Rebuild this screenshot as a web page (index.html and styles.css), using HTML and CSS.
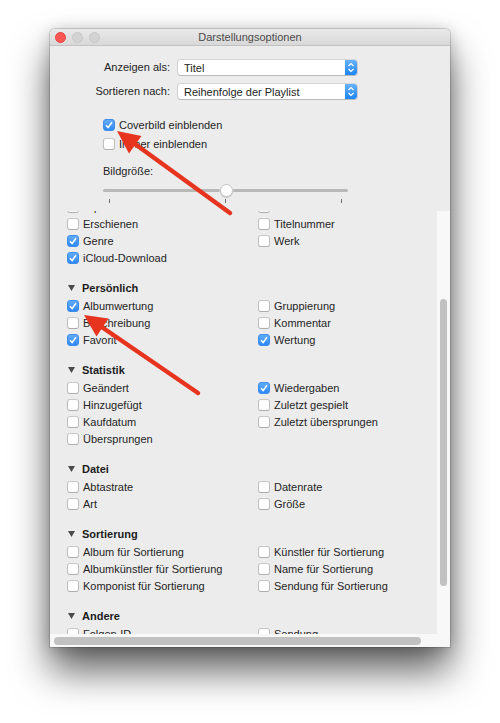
FILE: index.html
```html
<!DOCTYPE html>
<html lang="de">
<head>
    <meta charset="UTF-8">
    <title>Darstellungsoptionen</title>
    <link rel="stylesheet" href="styles.css">
</head>
<body>

    <div class="window">
        <!-- Titelleiste -->
        <div class="titlebar">
            <div class="lights">
                <span class="light red"></span>
                <span class="light"></span>
                <span class="light"></span>
            </div>
            <div class="title">Darstellungsoptionen</div>
        </div>

        <!-- Oberer Bereich -->
        <div class="top-pane">
            <div class="popups">
                <span class="label">Anzeigen als:</span>
                <div class="popup">
                    <span class="popup-text">Titel</span>
                    <span class="stepper"><svg width="12" height="15" viewBox="0 0 12 15"><path d="M3.5 6 L6 3.5 L8.5 6 M3.5 9 L6 11.5 L8.5 9" fill="none" stroke="#fff" stroke-width="1.2"/></svg></span>
                </div>
                <span class="label">Sortieren nach:</span>
                <div class="popup">
                    <span class="popup-text">Reihenfolge der Playlist</span>
                    <span class="stepper"><svg width="12" height="15" viewBox="0 0 12 15"><path d="M3.5 6 L6 3.5 L8.5 6 M3.5 9 L6 11.5 L8.5 9" fill="none" stroke="#fff" stroke-width="1.2"/></svg></span>
                </div>
            </div>

            <div class="display">
                <div class="check-row"><span class="box checked"><svg width="10" height="10" viewBox="0 0 10 10"><path d="M2 5.3 L4.1 7.5 L8 2.3" fill="none" stroke="#fff" stroke-width="1.5"/></svg></span>Coverbild einblenden</div>
                <div class="check-row"><span class="box"></span>Immer einblenden</div>
                <div class="size-label">Bildgröße:</div>
                <div class="slider">
                    <span class="track left"></span>
                    <span class="thumb"></span>
                    <span class="track right"></span>
                </div>
                <div class="ticks"><i></i><i></i><i></i></div>
            </div>
        </div>

        <!-- Spaltenliste -->
        <div class="scroll">
            <div class="viewport">
                <div class="list">
                    <div class="section first">
                        <div class="items">
                            <div class="item"><span class="box"></span>Equalizer</div>
                            <div class="item"><span class="box"></span>Titel</div>
                            <div class="item"><span class="box"></span>Erschienen</div>
                            <div class="item"><span class="box"></span>Titelnummer</div>
                            <div class="item"><span class="box checked"><svg width="10" height="10" viewBox="0 0 10 10"><path d="M2 5.3 L4.1 7.5 L8 2.3" fill="none" stroke="#fff" stroke-width="1.5"/></svg></span>Genre</div>
                            <div class="item"><span class="box"></span>Werk</div>
                            <div class="item"><span class="box checked"><svg width="10" height="10" viewBox="0 0 10 10"><path d="M2 5.3 L4.1 7.5 L8 2.3" fill="none" stroke="#fff" stroke-width="1.5"/></svg></span>iCloud-Download</div>
                        </div>
                    </div>

                    <div class="section">
                        <div class="header"><svg width="7" height="6" viewBox="0 0 7 6"><polygon points="0,0 7,0 3.5,6" fill="#4a4a4a"/></svg>Persönlich</div>
                        <div class="items">
                            <div class="item"><span class="box checked"><svg width="10" height="10" viewBox="0 0 10 10"><path d="M2 5.3 L4.1 7.5 L8 2.3" fill="none" stroke="#fff" stroke-width="1.5"/></svg></span>Albumwertung</div>
                            <div class="item"><span class="box"></span>Gruppierung</div>
                            <div class="item"><span class="box"></span>Beschreibung</div>
                            <div class="item"><span class="box"></span>Kommentar</div>
                            <div class="item"><span class="box checked"><svg width="10" height="10" viewBox="0 0 10 10"><path d="M2 5.3 L4.1 7.5 L8 2.3" fill="none" stroke="#fff" stroke-width="1.5"/></svg></span>Favorit</div>
                            <div class="item"><span class="box checked"><svg width="10" height="10" viewBox="0 0 10 10"><path d="M2 5.3 L4.1 7.5 L8 2.3" fill="none" stroke="#fff" stroke-width="1.5"/></svg></span>Wertung</div>
                        </div>
                    </div>

                    <div class="section">
                        <div class="header"><svg width="7" height="6" viewBox="0 0 7 6"><polygon points="0,0 7,0 3.5,6" fill="#4a4a4a"/></svg>Statistik</div>
                        <div class="items">
                            <div class="item"><span class="box"></span>Geändert</div>
                            <div class="item"><span class="box checked"><svg width="10" height="10" viewBox="0 0 10 10"><path d="M2 5.3 L4.1 7.5 L8 2.3" fill="none" stroke="#fff" stroke-width="1.5"/></svg></span>Wiedergaben</div>
                            <div class="item"><span class="box"></span>Hinzugefügt</div>
                            <div class="item"><span class="box"></span>Zuletzt gespielt</div>
                            <div class="item"><span class="box"></span>Kaufdatum</div>
                            <div class="item"><span class="box"></span>Zuletzt übersprungen</div>
                            <div class="item"><span class="box"></span>Übersprungen</div>
                        </div>
                    </div>

                    <div class="section">
                        <div class="header"><svg width="7" height="6" viewBox="0 0 7 6"><polygon points="0,0 7,0 3.5,6" fill="#4a4a4a"/></svg>Datei</div>
                        <div class="items">
                            <div class="item"><span class="box"></span>Abtastrate</div>
                            <div class="item"><span class="box"></span>Datenrate</div>
                            <div class="item"><span class="box"></span>Art</div>
                            <div class="item"><span class="box"></span>Größe</div>
                        </div>
                    </div>

                    <div class="section">
                        <div class="header"><svg width="7" height="6" viewBox="0 0 7 6"><polygon points="0,0 7,0 3.5,6" fill="#4a4a4a"/></svg>Sortierung</div>
                        <div class="items">
                            <div class="item"><span class="box"></span>Album für Sortierung</div>
                            <div class="item"><span class="box"></span>Künstler für Sortierung</div>
                            <div class="item"><span class="box"></span>Albumkünstler für Sortierung</div>
                            <div class="item"><span class="box"></span>Name für Sortierung</div>
                            <div class="item"><span class="box"></span>Komponist für Sortierung</div>
                            <div class="item"><span class="box"></span>Sendung für Sortierung</div>
                        </div>
                    </div>

                    <div class="section">
                        <div class="header"><svg width="7" height="6" viewBox="0 0 7 6"><polygon points="0,0 7,0 3.5,6" fill="#4a4a4a"/></svg>Andere</div>
                        <div class="items">
                            <div class="item"><span class="box"></span>Folgen-ID</div>
                            <div class="item"><span class="box"></span>Sendung</div>
                        </div>
                    </div>
                </div>
            </div>
            <div class="vtrack"><div class="vthumb"></div></div>
            <div class="htrack"><div class="hthumb"></div></div>
            <div class="corner"></div>
        </div>
    </div>

    <!-- Rote Pfeile (Anmerkungen) -->
    <svg class="arrows" width="500" height="723" viewBox="0 0 500 723">
        <line x1="230" y1="213" x2="135" y2="144" stroke="#e6341f" stroke-width="4.5" stroke-linecap="round"/>
        <polygon points="117,131 141.5,136 129,153.5" fill="#e6341f"/>
        <line x1="198" y1="393" x2="101" y2="326.5" stroke="#e6341f" stroke-width="4.5" stroke-linecap="round"/>
        <polygon points="84,315 108.5,318.5 96.5,336.5" fill="#e6341f"/>
    </svg>

</body>
</html>
```

FILE: styles.css
```css
body {
    margin: 0;
    padding: 29px 0 0 0;
    min-height: 723px;
    box-sizing: border-box;
    background: #fff;
    font-family: 'Liberation Sans', Arial, sans-serif;
    font-size: 11px;
    color: #242424;
}

/* Fenster mit Schatten */
.window {
    position: relative;
    width: 400px;
    height: 618px;
    margin: 0 auto;
    background: #ececec;
    border-radius: 5px 5px 0 0;
    display: flex;
    flex-direction: column;
    box-shadow: 0 0 0 1px rgba(0, 0, 0, 0.14), 0 24px 38px rgba(0, 0, 0, 0.62), 0 2px 16px rgba(0, 0, 0, 0.22);
}

/* Titelleiste */
.titlebar {
    height: 16px;
    flex-shrink: 0;
    display: grid;
    grid-template-columns: 1fr auto 1fr;
    align-items: center;
    background: linear-gradient(#e9e9e9, #d8d8d8);
    border-bottom: 1px solid #c2c2c2;
    border-radius: 5px 5px 0 0;
}

.lights {
    display: flex;
    gap: 6px;
    padding-left: 5px;
}

.light {
    width: 11px;
    height: 11px;
    box-sizing: border-box;
    border-radius: 50%;
    background: #d3d3d3;
    border: 1px solid #c8c8c8;
}

.light.red {
    background: #fc5753;
    border-color: #e8423e;
}

.title {
    color: #4a4a4a;
    line-height: 16px;
}

/* Oberer Bereich */
.top-pane {
    height: 165px;
    flex-shrink: 0;
}

.popups {
    display: grid;
    grid-template-columns: 120px 181px;
    column-gap: 7px;
    row-gap: 7px;
    margin-top: 13px;
}

.label {
    text-align: right;
    line-height: 17px;
}

.popup {
    height: 17px;
    box-sizing: border-box;
    display: flex;
    align-items: center;
    background: #fff;
    border: 1px solid #cdcdcd;
    border-top-color: #d6d6d6;
    border-bottom-color: #b9b9b9;
    border-radius: 4px;
    overflow: hidden;
}

.popup-text {
    padding-left: 6px;
    flex: 1;
}

.stepper {
    width: 12px;
    height: 100%;
    display: flex;
    align-items: center;
    justify-content: center;
    background: linear-gradient(#6ab2fb, #1d84fb);
}

.display {
    padding-left: 53px;
    margin-top: 15px;
}

.check-row {
    height: 19px;
    display: flex;
    align-items: center;
}

.size-label {
    margin-top: 10px;
    line-height: 16px;
}

.slider {
    width: 245px;
    height: 13px;
    margin-top: 5px;
    display: flex;
    align-items: center;
}

.track {
    height: 3px;
    background: #b9b9b9;
    border-radius: 2px;
}

.track.left {
    width: 117px;
}

.track.right {
    flex: 1;
}

.thumb {
    width: 13px;
    height: 13px;
    box-sizing: border-box;
    border-radius: 50%;
    background: #fff;
    border: 1px solid #c4c4c4;
    box-shadow: 0 1px 1px rgba(0, 0, 0, 0.15);
}

.ticks {
    width: 245px;
    box-sizing: border-box;
    padding: 0 6px;
    margin-top: 2px;
    display: flex;
    justify-content: space-between;
}

.ticks i {
    width: 1px;
    height: 4px;
    background: #6f6f6f;
}

/* Checkboxen */
.box {
    width: 12px;
    height: 12px;
    box-sizing: border-box;
    flex-shrink: 0;
    margin-right: 4px;
    border: 1px solid #bdbdbd;
    border-top-color: #c9c9c9;
    border-bottom-color: #acacac;
    border-radius: 3px;
    background: #fff;
    display: flex;
    align-items: center;
    justify-content: center;
}

.box.checked {
    background: linear-gradient(#63abf9, #2f89f6);
    border-color: #3a8ded;
}

/* Liste */
.scroll {
    flex: 1;
    display: grid;
    grid-template-columns: 1fr 13px;
    grid-template-rows: 1fr 13px;
    min-height: 0;
}

.viewport {
    overflow: hidden;
    min-height: 0;
}

.list {
    margin-top: -13px;
    padding-left: 17px;
}

.section {
    margin-top: 13px;
}

.section.first {
    margin-top: 0;
}

.header {
    height: 18px;
    display: flex;
    align-items: center;
    gap: 7px;
    font-weight: bold;
    color: #1c1c1c;
    padding-left: 1px;
}

.items {
    display: grid;
    grid-template-columns: 191px 191px;
    grid-auto-rows: 17px;
}

.item {
    display: flex;
    align-items: center;
    white-space: nowrap;
}

.vtrack {
    background: #f8f8f8;
    padding: 88px 0 0 3px;
}

.vthumb {
    width: 7px;
    height: 287px;
    border-radius: 4px;
    background: #c1c1c1;
}

.htrack {
    background: #f8f8f8;
    padding: 3px 0 0 4px;
}

.hthumb {
    width: 367px;
    height: 8px;
    border-radius: 4px;
    background: #c1c1c1;
}

.corner {
    background: #f8f8f8;
}

/* Pfeile */
.arrows {
    position: absolute;
    top: 0;
    left: 0;
    pointer-events: none;
}
```
